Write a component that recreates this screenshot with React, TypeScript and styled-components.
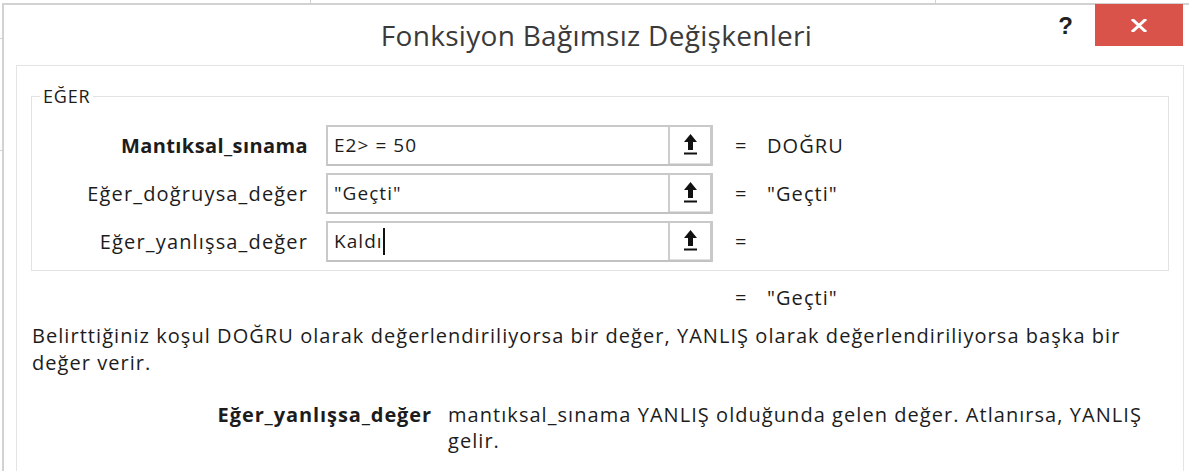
import React from 'react';
import styled, { createGlobalStyle, css } from 'styled-components';

const GlobalStyle = createGlobalStyle`
  html, body {
    margin: 0;
    padding: 0;
    background: #ffffff;
    overflow: hidden;
  }
  body {
    font-family: "Open Sans", "Noto Sans", Arial, sans-serif;
    color: #1c1c1c;
  }
`;

const lineColor = '#d2d2d2';

// dialog text is rendered with wide GDI-like spacing
const BodyText = css`
  font-size: 20px;
  letter-spacing: 1.05px;
`;

const Page = styled.div`
  width: 1189px;
  height: 471px;
  overflow: hidden;
  padding-top: 3px;
  box-sizing: border-box;
  background:
    linear-gradient(${lineColor}, ${lineColor}) 310px 0 / 1px 3px no-repeat,
    linear-gradient(${lineColor}, ${lineColor}) 935px 0 / 1px 3px no-repeat,
    linear-gradient(${lineColor}, ${lineColor}) 0 38px / 2px 1px no-repeat,
    linear-gradient(${lineColor}, ${lineColor}) 0 150px / 2px 1px no-repeat,
    #ffffff;
`;

const Dialog = styled.div`
  margin-left: 2px;
  border-top: 2px solid ${lineColor};
  border-left: 2px solid ${lineColor};
  background: #ffffff;
  height: 100%;
`;

const TitleBar = styled.div`
  display: grid;
  grid-template-columns: 1fr auto 1fr;
  height: 61px;
  margin-top: -1px;
`;

const Title = styled.div`
  grid-column: 2;
  align-self: center;
  font-size: 28px;
  letter-spacing: 0.3px;
  color: #3a3a3a;
  padding-top: 1px;
`;

const Controls = styled.div`
  grid-column: 3;
  display: flex;
  justify-content: flex-end;
  align-items: flex-start;
  gap: 22px;
  padding-right: 6px;
`;

const Help = styled.span`
  font-family: "Liberation Sans", Arial, sans-serif;
  font-weight: 700;
  font-size: 24px;
  color: #222;
  margin-top: 8px;
`;

const CloseButton = styled.button`
  width: 88px;
  height: 42px;
  border: none;
  background: #d9534b;
  display: flex;
  align-items: center;
  justify-content: center;
  padding: 0;
`;

const Panel = styled.div`
  margin: 0 5px 0 12px;
  border-top: 1px solid #e4e4e4;
  border-left: 1px solid #e4e4e4;
  border-right: 1px solid #e4e4e4;
  padding: 18px 14px 0 15px;
  height: 420px;
`;

const Group = styled.fieldset`
  margin: 0 0 0 -1px;
  border: 1px solid #e2e2e2;
  padding: 13px 0 5px 0;
`;

const Legend = styled.legend`
  font-size: 18px;
  letter-spacing: 0.8px;
  margin-left: 8px;
  padding: 0 3px;
  color: #1c1c1c;
`;

const Row = styled.div`
  display: flex;
  align-items: center;
  height: 48px;
`;

const Label = styled.div<{ $bold?: boolean }>`
  ${BodyText}
  width: 276px;
  text-align: right;
  font-weight: ${({ $bold }) => ($bold ? 700 : 400)};
  letter-spacing: ${({ $bold }) => ($bold ? '0.4px' : '1.15px')};
  margin-right: 18px;
  white-space: nowrap;
`;

const Field = styled.div`
  display: flex;
  width: 387px;
  height: 41px;
  box-sizing: border-box;
  border: 2px solid #c9c9c9;
  border-right-width: 3px;
  border-bottom-color: #c2c2c2;
`;

const Input = styled.div`
  ${BodyText}
  font-size: 19px;
  flex: 1;
  display: flex;
  align-items: center;
  padding-left: 6px;
  border-right: 2px solid #cdcdcd;
`;

const Caret = styled.span`
  display: inline-block;
  width: 0;
  height: 27px;
  border-left: 2px solid #111;
  margin-left: 0;
`;

const CollapseButton = styled.div`
  width: 40px;
  display: flex;
  align-items: center;
  justify-content: center;
  background: #ffffff;
  border-bottom: 1px solid #e0e0e0;
`;

const Equals = styled.span`
  ${BodyText}
  width: 32px;
  margin-left: 22px;
`;

const Value = styled.span`
  ${BodyText}
`;

const ResultRow = styled(Row)`
  height: 50px;
  padding-left: 681px;
  margin-top: 1px;
`;

const Description = styled.p`
  ${BodyText}
  margin: 0;
  line-height: 27px;
`;

const ArgHelp = styled.div`
  ${BodyText}
  display: flex;
  margin-top: 26px;
  line-height: 26px;
`;

const ArgName = styled.div`
  width: 400px;
  text-align: right;
  font-weight: 700;
  letter-spacing: 0.9px;
  margin-right: 16px;
  white-space: nowrap;
`;

const ArgText = styled.div`
  width: 700px;
`;

const HelpLink = styled.div`
  ${BodyText}
  margin-top: 14px;
  margin-left: -14px;
  color: #1a3fc8;
`;

const UploadIcon = () => (
  <svg width="13" height="21" viewBox="0 0 13 21" aria-hidden>
    <path d="M6.5 0 L13 8 H9 V16 H4 V8 H0 Z" fill="#111" />
    <rect x="0" y="18.5" width="13" height="2" fill="#111" />
  </svg>
);

const CloseIcon = () => (
  <svg width="16" height="13" viewBox="0 0 16 13" aria-hidden>
    <path d="M2 1 L14 12 M14 1 L2 12" stroke="#fff" strokeWidth="3" strokeLinecap="square" />
  </svg>
);

interface Arg {
  label: string;
  value: React.ReactNode;
  result: string;
  bold?: boolean;
}

const args: Arg[] = [
  { label: 'Mantıksal_sınama', value: 'E2> = 50', result: 'DOĞRU', bold: true },
  { label: 'Eğer_doğruysa_değer', value: '"Geçti"', result: '"Geçti"' },
  { label: 'Eğer_yanlışsa_değer', value: <>Kaldı<Caret /></>, result: '' },
];

export default function App() {
  return (
    <Page>
      <GlobalStyle />
      <Dialog>
        <TitleBar>
          <Title>Fonksiyon Bağımsız Değişkenleri</Title>
          <Controls>
            <Help>?</Help>
            <CloseButton aria-label="Kapat">
              <CloseIcon />
            </CloseButton>
          </Controls>
        </TitleBar>
        <Panel>
          <Group>
            <Legend>EĞER</Legend>
            {args.map((a) => (
              <Row key={a.label}>
                <Label $bold={a.bold}>{a.label}</Label>
                <Field>
                  <Input>{a.value}</Input>
                  <CollapseButton>
                    <UploadIcon />
                  </CollapseButton>
                </Field>
                <Equals>=</Equals>
                <Value>{a.result}</Value>
              </Row>
            ))}
          </Group>
          <ResultRow>
            <Equals>=</Equals>
            <Value>"Geçti"</Value>
          </ResultRow>
          <Description>
            Belirttiğiniz koşul DOĞRU olarak değerlendiriliyorsa bir değer, YANLIŞ olarak değerlendiriliyorsa başka bir değer verir.
          </Description>
          <ArgHelp>
            <ArgName>Eğer_yanlışsa_değer</ArgName>
            <ArgText>mantıksal_sınama YANLIŞ olduğunda gelen değer. Atlanırsa, YANLIŞ gelir.</ArgText>
          </ArgHelp>
          <HelpLink>Bu işlevle ilgili yardım</HelpLink>
        </Panel>
      </Dialog>
    </Page>
  );
}
